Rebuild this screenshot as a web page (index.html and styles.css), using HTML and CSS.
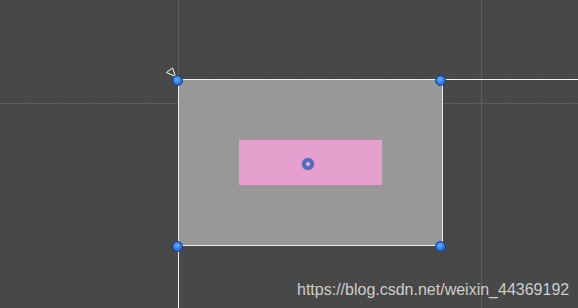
FILE: index.html
```html
<!DOCTYPE html>
<html lang="en">
<head>
    <meta charset="UTF-8">
    <title>Scene</title>
    <link rel="stylesheet" href="styles.css">
</head>
<body>
    <div class="scene">
        <!-- сетка -->
        <div class="grid-line axis-h"></div>
        <div class="grid-line axis-v-left"></div>
        <div class="grid-line axis-v-right"></div>

        <!-- направляващи линии на канваса -->
        <div class="guide guide-top"></div>
        <div class="guide guide-left"></div>

        <div class="rect-box">
            <div class="inner-image">
                <div class="pivot"></div>
            </div>
        </div>

        <svg class="anchor" width="14" height="14" viewBox="0 0 14 14">
            <polygon points="1.5,6.5 7.5,2 10.5,10.5" fill="none" stroke="#ffffff" stroke-width="1"/>
        </svg>

        <div class="handle h-tl"></div>
        <div class="handle h-tr"></div>
        <div class="handle h-bl"></div>
        <div class="handle h-br"></div>

        <div class="watermark">https://blog.csdn.net/weixin_44369192</div>
    </div>
</body>
</html>
```

FILE: styles.css
```css
/* Общи стилове */
body {
    margin: 0;
    background-color: #484848;
    font-family: 'Liberation Sans', Arial, sans-serif;
    overflow: hidden;
}

.scene {
    position: relative;
    width: 578px;
    height: 308px;
    background-color: #484848;
    background-image: repeating-linear-gradient(90deg, transparent 0, transparent 29px, rgba(255, 255, 255, 0.015) 29px, rgba(255, 255, 255, 0.015) 30px);
    overflow: hidden;
}

/* Сетка */
.grid-line {
    position: absolute;
    background-color: #5d5d5d;
}

.axis-h {
    left: 0;
    right: 0;
    top: 103px;
    height: 1px;
}

.axis-v-left {
    left: 178px;
    top: 0;
    bottom: 0;
    width: 1px;
}

.axis-v-right {
    left: 481px;
    top: 0;
    bottom: 0;
    width: 1px;
}

/* Направляващи */
.guide {
    position: absolute;
    background-color: #f2f2f2;
}

.guide-top {
    left: 178px;
    right: 0;
    top: 79px;
    height: 1px;
}

.guide-left {
    left: 178px;
    top: 79px;
    bottom: 0;
    width: 1px;
}

/* Правоъгълник */
.rect-box {
    position: absolute;
    left: 178px;
    top: 79px;
    width: 265px;
    height: 167px;
    box-sizing: border-box;
    border: 1px solid #ececec;
    background-color: #989898;
}

.inner-image {
    position: absolute;
    left: 60px;
    top: 60px;
    width: 143px;
    height: 45px;
    background-color: #e6a0cd;
}

.pivot {
    position: absolute;
    left: 63px;
    top: 18px;
    width: 4px;
    height: 4px;
    border-radius: 50%;
    border: 4px solid #4f6fc4;
    background-color: #efbadc;
    box-shadow: 0 0 1px rgba(40, 60, 120, 0.7);
}

.anchor {
    position: absolute;
    left: 165px;
    top: 66px;
}

/* Дръжки */
.handle {
    position: absolute;
    width: 9px;
    height: 9px;
    border-radius: 50%;
    background: radial-gradient(circle at 45% 40%, #6fb2ff 0, #2f7ff0 45%, #1d5fcc 100%);
    border: 1px solid #1f3a6a;
}

.h-tl {
    left: 172px;
    top: 75px;
}

.h-tr {
    left: 435px;
    top: 75px;
}

.h-bl {
    left: 172px;
    top: 241px;
}

.h-br {
    left: 435px;
    top: 241px;
}

.watermark {
    position: absolute;
    left: 297px;
    top: 281px;
    font-size: 16px;
    line-height: 18px;
    color: #cdcdcd;
    white-space: nowrap;
}
```
